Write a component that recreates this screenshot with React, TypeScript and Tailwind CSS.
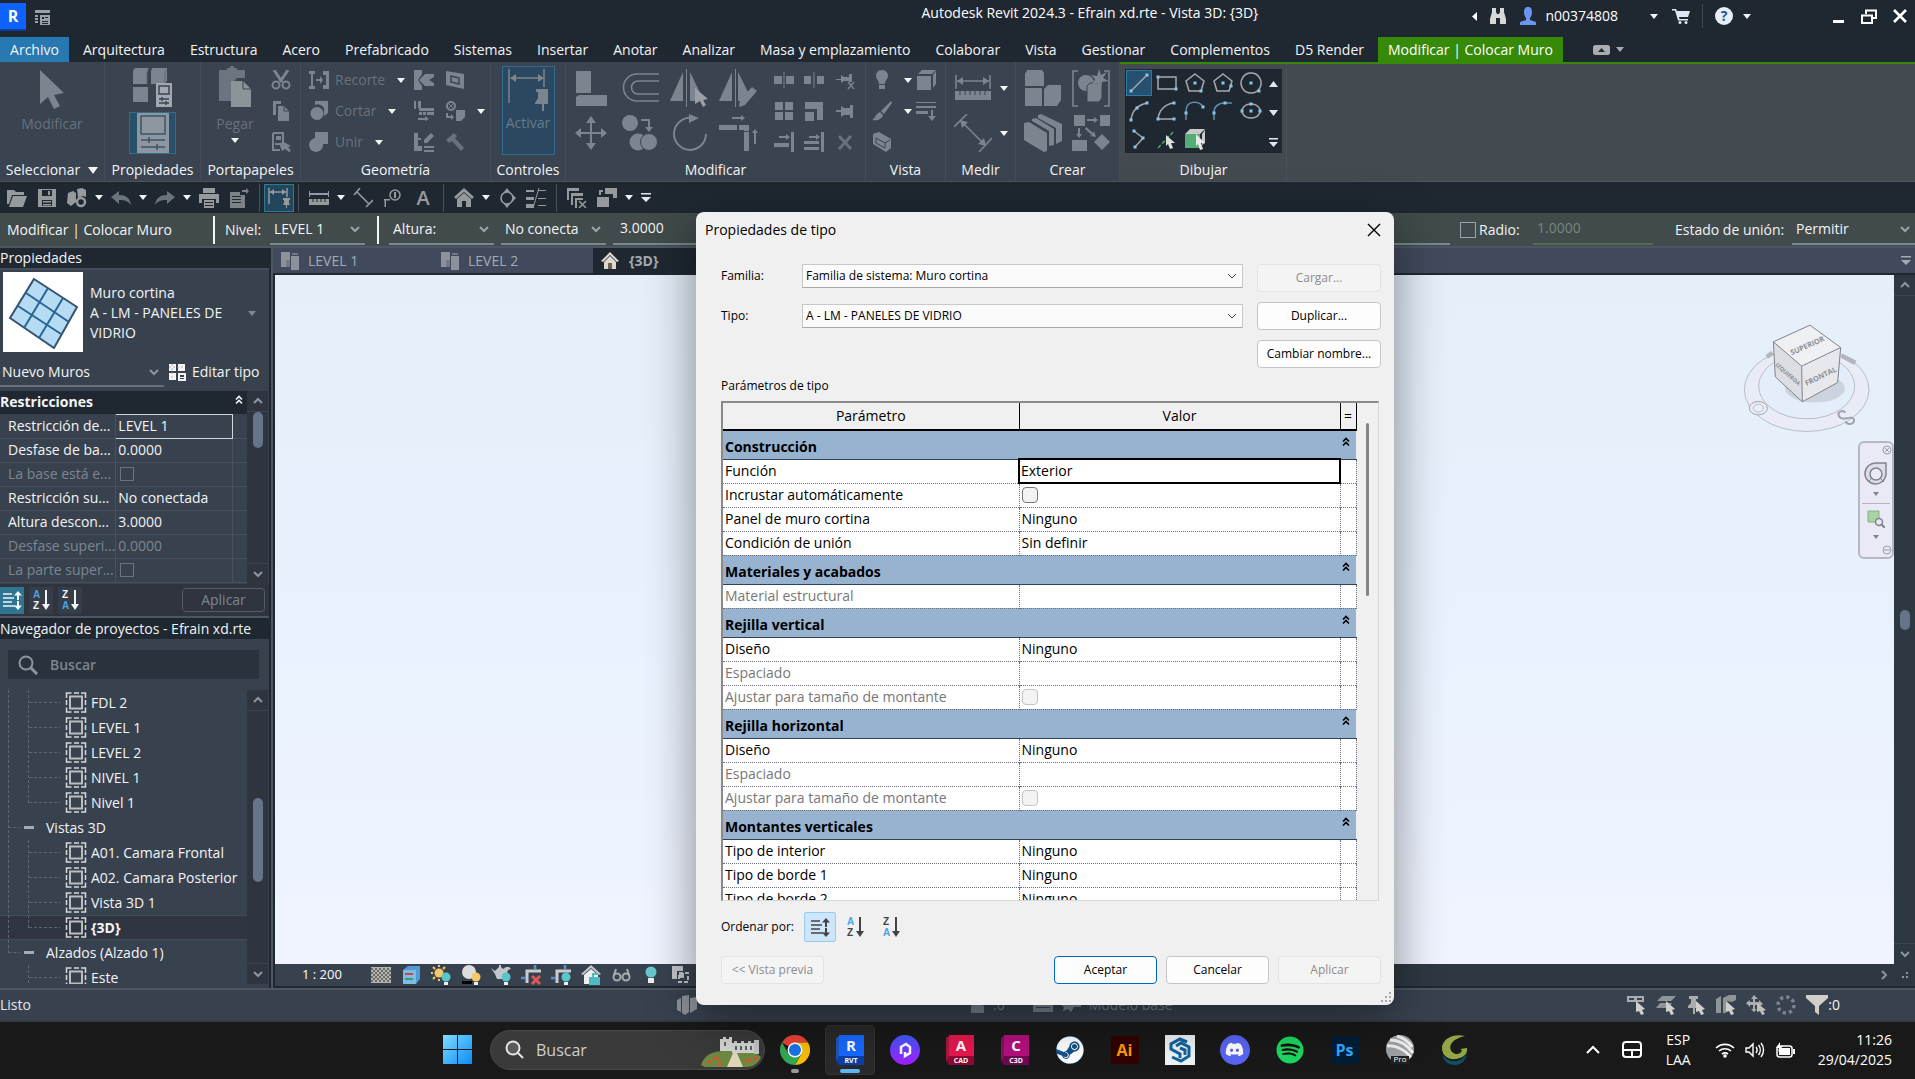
import type { ReactNode } from "react";
import { FaDiscord, FaSpotify, FaSteam } from "react-icons/fa";

type IconProps = { w: number; h: number; children: ReactNode; className?: string };

function Icon({ w, h, children, className = "" }: IconProps) {
  return (
    <svg width={w} height={h} viewBox={`0 0 ${w} ${h}`} fill="currentColor" aria-hidden="true" className={`shrink-0 ${className}`}>
      {children}
    </svg>
  );
}

function IconButton({ label, children, className = "" }: { label: string; children: ReactNode; className?: string }) {
  return (
    <button type="button" aria-label={label} className={`flex shrink-0 items-center justify-center ${className}`}>
      {children}
    </button>
  );
}

function Caret({ className = "text-gray-100" }: { className?: string }) {
  return (
    <Icon w={8} h={5} className={className}>
      <path d="M0 0h8L4 5z" />
    </Icon>
  );
}

function Chevron({ dir = "down", className = "" }: { dir?: "down" | "up" | "right"; className?: string }) {
  const d = dir === "down" ? "M2 4l4 4 4-4" : dir === "up" ? "M2 8l4-4 4 4" : "M4 2l4 4-4 4";
  return (
    <Icon w={12} h={12} className={className}>
      <path d={d} fill="none" stroke="currentColor" strokeWidth="2" />
    </Icon>
  );
}

function DoubleUp() {
  return (
    <Icon w={8} h={10}>
      <path d="M1 4.5L4 1.5l3 3M1 8.5l3-3 3 3" fill="none" stroke="currentColor" strokeWidth="1.6" />
    </Icon>
  );
}

function SortIcon({ kind }: { kind: "list" | "az" | "za" }) {
  if (kind === "list") {
    return (
      <Icon w={22} h={22}>
        <path d="M2 5h9M2 9h11M2 13h9M2 17h12" stroke="currentColor" strokeWidth="1.6" />
        <path d="M17 2l4 4.5h-3V11h-2V6.5h-3zM17 21l-4-4.5h3V12h2v4.5h3z" />
      </Icon>
    );
  }
  return (
    <Icon w={22} h={24} className="font-['Liberation_Sans',sans-serif] text-[10px] font-bold">
      <text x="3" y="10" className={kind === "az" ? "fill-[#4aa3e0]" : ""}>{kind === "az" ? "A" : "Z"}</text>
      <text x="3" y="21" className={kind === "za" ? "fill-[#4aa3e0]" : ""}>{kind === "az" ? "Z" : "A"}</text>
      <path d="M15 2h2v14h3l-4 6-4-6h3z" />
    </Icon>
  );
}

/* ---------- title bar ---------- */

function TitleBar() {
  return (
    <header className="flex h-[37px] items-start text-white">
      <div className="flex flex-1 items-center gap-2 pt-[3px]">
        <span className="flex h-7 w-[26px] items-center justify-center border-b-2 border-[#0b3f9e] bg-[#0f62fe] text-base font-bold">R</span>
        <IconButton label="Inicio" className="text-[#9aa0a6]">
          <Icon w={17} h={17}>
            <path d="M1 1h15v3H1zM1 6h3v2H1zM1 9h3v2H1zM1 12h3v2H1zM6 6h10v10H6z" />
            <path d="M8 8h2v2H8zM11 8h3v1h-3zM8 12h6v1H8zM8 14h6v1H8z" fill="#1f2831" />
          </Icon>
        </IconButton>
      </div>
      <h1 className="pt-[3px] pr-[214px] text-sm">Autodesk Revit 2024.3 - Efrain xd.rte - Vista 3D: {"{3D}"}</h1>
      <div className="flex h-8 items-center pr-2">
        <Icon w={5} h={9}><path d="M5 0v9L0 4.5z" /></Icon>
        <IconButton label="Buscar" className="ml-3">
          <Icon w={18} h={18} className="text-[#d8d8d8]">
            <path d="M3 1h4v4l1 2h2l1-2V1h4v4l2 7v5h-6v-6H7v6H1v-5l2-7z" />
          </Icon>
        </IconButton>
        <button type="button" className="ml-3 flex items-center gap-2 text-sm">
          <Icon w={18} h={18} className="text-[#6a94ee]">
            <path d="M9 0c3 0 4 2 4 5s-1 5-2 6v2l6 2v3H1v-3l6-2v-2C6 10 5 8 5 5s1-5 4-5z" />
          </Icon>
          n00374808
        </button>
        <span className="ml-8"><Caret /></span>
        <IconButton label="Tienda" className="ml-3.5">
          <Icon w={18} h={16} className="text-[#dfe6f5]">
            <path d="M0 1h4l1 2h13l-2 6H7l.5 2H16v1.5H6L3 2.5H0z" />
            <circle cx="8" cy="14.5" r="1.5" /><circle cx="14" cy="14.5" r="1.5" />
          </Icon>
        </IconButton>
        <span className="ml-3 h-6 w-px bg-[#3d4750]" />
        <IconButton label="Ayuda" className="ml-3 size-[18px] rounded-full bg-[#e6eef8] text-sm font-bold text-[#25509f]">?</IconButton>
        <span className="ml-2.5"><Caret /></span>
        <IconButton label="Minimizar" className="ml-20 h-4 w-4">
          <Icon w={12} h={14}><path d="M0 11h11v3H0z" /></Icon>
        </IconButton>
        <IconButton label="Restaurar" className="ml-3.5">
          <Icon w={16} h={15}>
            <path d="M5 5V1.5h10V9h-4M1 6.5h10V14H1z" fill="none" stroke="currentColor" strokeWidth="2" />
          </Icon>
        </IconButton>
        <IconButton label="Cerrar" className="ml-4">
          <Icon w={14} h={14}><path d="M1 1l12 12M13 1L1 13" stroke="currentColor" strokeWidth="2.6" /></Icon>
        </IconButton>
      </div>
    </header>
  );
}

const tabs = [
  "Arquitectura", "Estructura", "Acero", "Prefabricado", "Sistemas", "Insertar", "Anotar", "Analizar",
  "Masa y emplazamiento", "Colaborar", "Vista", "Gestionar", "Complementos", "D5 Render",
];

function RibbonTabs() {
  return (
    <nav className="flex h-[25px] items-stretch text-sm whitespace-nowrap text-gray-100">
      <button type="button" className="w-[69px] shrink-0 bg-[#2878b2]">Archivo</button>
      <div className="ml-3.5 flex gap-[25px]">
        {tabs.map((tab) => (
          <button key={tab} type="button">{tab}</button>
        ))}
      </div>
      <button type="button" className="ml-3.5 bg-[#378a08] px-2.5 text-white">Modificar | Colocar Muro</button>
      <IconButton label="Minimizar cinta" className="ml-[30px] gap-1.5 text-[#a9adb1]">
        <Icon w={17} h={10}>
          <rect width="17" height="10" rx="2.5" /><path d="M5 7l3.5-4L12 7z" fill="#1f2831" />
        </Icon>
        <Caret className="text-[#a9adb1]" />
      </IconButton>
    </nav>
  );
}

/* ---------- ribbon ---------- */

function Panel({ title, children, className = "" }: { title: ReactNode; children: ReactNode; className?: string }) {
  return (
    <section className={`flex shrink-0 flex-col border-r border-[#454e5c] bg-[#3a4350] ${className}`}>
      <div className="flex h-[97px] text-[#7c848f]">{children}</div>
      <h2 className="flex flex-1 items-center justify-center gap-2 text-sm text-gray-100">{title}</h2>
    </section>
  );
}

function SmallCol({ children, className = "" }: { children: ReactNode; className?: string }) {
  return <div className={`flex flex-col gap-[11px] pt-2 ${className}`}>{children}</div>;
}

function Cell({ label, caret, children, className = "" }: { label: string; caret?: boolean; children: ReactNode; className?: string }) {
  return (
    <span className={`flex h-5 items-center ${className}`}>
      <IconButton label={label}>{children}</IconButton>
      {caret && <span className="ml-3"><Caret /></span>}
    </span>
  );
}

function SelectPanel() {
  return (
    <Panel className="w-[105px]" title={<>Seleccionar <Icon w={10} h={7}><path d="M0 0h10L5 7z" /></Icon></>}>
      <button type="button" className="flex w-full flex-col items-center pt-2 text-sm">
        <Icon w={24} h={40}><path d="M0 0v34l8-7 6 12 6-3-6-11 10-2z" /></Icon>
        <span className="mt-1 text-[#68717d]">Modificar</span>
      </button>
    </Panel>
  );
}

function PropertiesPanel() {
  return (
    <Panel className="w-24" title="Propiedades">
      <div className="flex w-full flex-col items-center gap-1 pt-1">
        <IconButton label="Propiedades de tipo">
          <Icon w={42} h={42}>
            <path d="M3 2h14l-2 3v13H1V5zM20 2h15v13l-3 3H19V5zM1 21h15v15H1z" />
            <path d="M17 4l-2 2v12M35 4l-2 2v12" stroke="#5c6571" fill="none" />
            <path d="M24 17h16v24H24z" fill="#a3a9b0" />
            <path d="M27 20h10v8H27z" fill="none" stroke="#3a4350" strokeWidth="1.5" />
            <path d="M27 33h10M27 37h10M30 31v4M34 35v4" stroke="#3a4350" strokeWidth="1.5" />
          </Icon>
        </IconButton>
        <IconButton label="Propiedades" className="h-[42px] w-[47px] border border-[#2f6e8e] bg-[#29506a]">
          <Icon w={32} h={40} className="text-[#8e979f]">
            <path d="M0 0h32v40H0z" />
            <path d="M4 3h24v18H4z" fill="none" stroke="#3b5568" strokeWidth="1.5" />
            <path d="M4 27h24M4 34h24M12 24v6M20 31v6" stroke="#3b5568" strokeWidth="1.5" />
          </Icon>
        </IconButton>
      </div>
    </Panel>
  );
}

function ClipboardPanel() {
  return (
    <Panel className="w-[100px]" title="Portapapeles">
      <button type="button" className="ml-2.5 flex w-12 flex-col items-center pt-1 text-sm">
        <Icon w={36} h={42}>
          <path d="M2 4h8V2h3V0h4v2h3v2h8v8h-8l-6 6v17H2z" fill="#6c7480" />
          <path d="M14 15h12l8 8v18H14z" fill="#8b939b" />
          <path d="M26 15v8h8" fill="none" stroke="#3a4350" />
        </Icon>
        <span className="mt-1.5 mb-1 text-[#68717d]">Pegar</span>
        <Caret />
      </button>
      <SmallCol className="ml-3">
        <Cell label="Cortar">
          <Icon w={20} h={20}>
            <path d="M3 0l8 12M17 0L9 12" stroke="currentColor" strokeWidth="3" />
            <circle cx="5" cy="15" r="3.5" fill="none" stroke="currentColor" strokeWidth="2" />
            <circle cx="15" cy="15" r="3.5" fill="none" stroke="currentColor" strokeWidth="2" />
          </Icon>
        </Cell>
        <Cell label="Copiar">
          <Icon w={20} h={20}>
            <path d="M2 0h8v3H5v11H2zM7 5h6l5 5v10H7z" /><path d="M13 5v5h5" fill="none" stroke="#3a4350" />
          </Icon>
        </Cell>
        <Cell label="Igualar propiedades">
          <Icon w={20} h={20}>
            <path d="M2 1h10v9M2 1v17h7" fill="none" stroke="currentColor" strokeWidth="2" />
            <path d="M5 4h5v4H5zM4 11h6v2H4zM11 9l9 5-3 1 3 4-2 1-4-3-3 2-2-5z" />
          </Icon>
        </Cell>
      </SmallCol>
    </Panel>
  );
}

const geometryTools = [
  { label: "Recorte", icon: <path d="M0 1h6v3H4v12h2v3H0v-3h2V4H0zM7 9h4V6l3 4-3 4v-3H7zM14 1h6v18h-6v-4h3V5h-3z" /> },
  { label: "Cortar", icon: <path d="M6 0h13v12l-4 3V7A7 7 0 0 0 6 4zM8 6a6.5 6.5 0 1 1-.1 13A6.5 6.5 0 0 1 8 6z" /> },
  { label: "Unir", icon: <path d="M6 0h13v12h-5a7 7 0 1 1-8-6z" /> },
];

function GeometryPanel() {
  return (
    <Panel className="w-[190px]" title="Geometría">
      <SmallCol className="ml-2 w-[105px] text-sm">
        {geometryTools.map((tool) => (
          <button key={tool.label} type="button" className="flex h-5 items-center text-[#68717d]">
            <Icon w={20} h={20} className="mr-1.5 text-[#7c848f]">{tool.icon}</Icon>
            {tool.label}
            <span className="ml-3"><Caret /></span>
          </button>
        ))}
      </SmallCol>
      <SmallCol>
        <Cell label="Muesca"><Icon w={20} h={20}><path d="M0 0h8v4l-4 6 4 6v4H0zM11 4h9v3l-5 3 5 3v3h-9l-6-6z" /></Icon></Cell>
        <Cell label="Juntas"><Icon w={20} h={20}><path d="M0 0h2v8H0zM4 0h3v7H4zM5 7h15v3H5zM5 11h3v3H5zM9 11h3v3H9zM13 11h7v3h-7zM4 17h7v-2l4 3-4 2v-1H4z" /></Icon></Cell>
        <Cell label="Uniones"><Icon w={20} h={20}><path d="M0 1h4v5h3v2H4v6h4v5H0zM10 8l7-7 3 3-7 7h-3zM10 14h10v2H10zM10 18h10v2H10z" /></Icon></Cell>
      </SmallCol>
      <SmallCol className="ml-[11px]">
        <Cell label="Cara"><Icon w={20} h={20}><path d="M1 1l18 3v15L1 15z" /><path d="M6 6l8 2v6l-8-2z" fill="none" stroke="#3a4350" strokeWidth="1.5" /></Icon></Cell>
        <Cell label="Pintar" caret>
          <Icon w={20} h={20}>
            <circle cx="6" cy="5" r="4" fill="none" stroke="currentColor" strokeWidth="2" />
            <path d="M3 2l6 6M9 2L3 8" stroke="currentColor" />
            <path d="M11 9h9v7l-4 4h-5zM1 12h2v3h3v-2l3 3-3 3v-2H1z" />
          </Icon>
        </Cell>
        <Cell label="Demoler"><Icon w={20} h={20} className="text-[#69717c]"><path d="M1 8l8-7 3 3-2 2 9 10-3 3-9-10-3 2z" /></Icon></Cell>
      </SmallCol>
    </Panel>
  );
}

function ControlsPanel() {
  return (
    <Panel className="w-[75px]" title="Controles">
      <button type="button" className="mx-auto mt-1 flex h-[89px] w-[53px] flex-col items-center justify-start border border-[#2f6e8e] bg-[#2b4860] pt-0.5 text-sm">
        <Icon w={40} h={42}>
          <path d="M1 0v34M36 0v18M3 9h32" stroke="currentColor" strokeWidth="1.5" fill="none" />
          <path d="M2 9l6-4v8zM36 9l-6-4v8zM28 20h14v3h-2v6l3 5v1h-7v7h-2v-7h-7v-1l3-5v-6h-2z" />
        </Icon>
        <span className="mt-0.5 text-[#68798a]">Activar</span>
      </button>
    </Panel>
  );
}

function ModifyPanel() {
  return (
    <Panel className="w-[300px]" title="Modificar">
      <div className="grid grid-cols-[49px_49px_49px_49px] content-start gap-y-[7px] pt-[7px]">
        <IconButton label="Alinear"><Icon w={34} h={38}><path d="M2 2h15v22H2zM5 26h28v11H2v-9z" /></Icon></IconButton>
        <IconButton label="Desfase">
          <Icon w={40} h={38}>
            <path d="M39 5H17a13 13 0 0 0 0 27h22M39 12H18a6 6 0 0 0 0 13h21" fill="none" stroke="currentColor" strokeWidth="1.6" />
          </Icon>
        </IconButton>
        <IconButton label="Simetría - Eje">
          <Icon w={40} h={38}><path d="M14 3v29H1zM21 3l14 29H21z" /><path d="M17.5 0v38" stroke="currentColor" /><path d="M26 19l13 11-5 1 3 5-3 2-3-6-5 3z" fill="#9aa0a6" /></Icon>
        </IconButton>
        <IconButton label="Simetría - Dibujar eje">
          <Icon w={40} h={38}><path d="M14 3v29H1zM20 3l10 20-8 9h-2z" /><path d="M17.5 0v38" stroke="currentColor" /><path d="M34 18l5 4-12 14-6 2 1-7z" /></Icon>
        </IconButton>
        <IconButton label="Desplazar">
          <Icon w={34} h={38}><path d="M17 2l5 7h-4v9h9v-4l6 5-6 5v-4h-9v9h4l-5 7-5-7h4v-9H7v4l-6-5 6-5v4h9V9h-4z" /></Icon>
        </IconButton>
        <IconButton label="Copiar elementos">
          <Icon w={38} h={38}><circle cx="9" cy="9" r="8" /><circle cx="17" cy="28" r="8.5" /><circle cx="28" cy="28" r="8.5" stroke="#3a4350" /><path d="M20 5h9v8h3l-4 5-4-5h3V7h-7z" /></Icon>
        </IconButton>
        <IconButton label="Rotar">
          <Icon w={38} h={38}><path d="M22 4A16 16 0 1 0 36 20" fill="none" stroke="currentColor" strokeWidth="2" /><path d="M19 0l10 4-10 5z" /></Icon>
        </IconButton>
        <IconButton label="Recortar">
          <Icon w={40} h={38}><path d="M1 11h18v5H1zM21 11h10v6h-5v-1h-5zM26 18h5v19h-5zM14 3h9V1l4 3-4 3V5h-9zM36 30V19h-2l3-4 3 4h-2v11z" /></Icon>
        </IconButton>
      </div>
      <SmallCol className="ml-3">
        <Cell label="Dividir"><Icon w={20} h={20}><path d="M0 6h8v8H0zM12 6h8v8h-8zM9.500 2h1v16h-1z" /></Icon></Cell>
        <Cell label="Matriz"><Icon w={20} h={20}><path d="M1 1h8v8H1zM11 1h8v8h-8zM1 11h8v8H1zM11 11h8v8h-8z" /></Icon></Cell>
        <Cell label="Extender uno"><Icon w={20} h={20}><path d="M17 0h3v20h-3zM0 11h15v4H0zM5 4h7V2l4 3-4 3V6H5z" /></Icon></Cell>
      </SmallCol>
      <SmallCol className="ml-2.5">
        <Cell label="Dividir con hueco"><Icon w={20} h={20}><path d="M0 6h7v8H0zM13 6h7v8h-7zM9.500 2h1v16h-1z" /></Icon></Cell>
        <Cell label="Escala"><Icon w={20} h={20}><path d="M1 1h18v18h-6V8H1zM1 11h9v9H1z" /></Icon></Cell>
        <Cell label="Extender varios"><Icon w={20} h={20}><path d="M17 0h3v20h-3zM0 9h15v3H0zM0 15h15v3H0zM5 4h7V2l4 3-4 3V6H5z" /></Icon></Cell>
      </SmallCol>
      <SmallCol className="ml-3">
        <Cell label="Desbloquear"><Icon w={20} h={20}><path d="M0 9h5V5l3 2h5V4h3v8h-3v-1H8l-3 2v-3H0z" /><path d="M12 12l6 7M18 12l-6 7" stroke="currentColor" strokeWidth="1.5" /></Icon></Cell>
        <Cell label="Bloquear"><Icon w={20} h={20}><path d="M0 9h5V5l3 2h6V4h3v13h-3v-3H8l-3 2v-5H0z" /></Icon></Cell>
        <Cell label="Suprimir"><Icon w={20} h={20} className="text-[#69717c]"><path d="M3 4l12 13M15 4L3 17" stroke="currentColor" strokeWidth="3" /></Icon></Cell>
      </SmallCol>
    </Panel>
  );
}

function ViewPanel() {
  return (
    <Panel className="w-20" title="Vista">
      <SmallCol className="ml-1.5 w-11">
        <Cell label="Ocultar" caret>
          <Icon w={20} h={20}><path d="M10 0c4 0 6 3 6 6s-3 4-3 8H7c0-4-3-5-3-8s2-6 6-6zM7 15h6v4H7z" /></Icon>
        </Cell>
        <Cell label="Modificar gráficos" caret>
          <Icon w={20} h={20}><path d="M19 0l1 2-8 11-3-3zM8 11l3 3c-1 4-5 6-11 5 3-1 3-6 8-8z" /></Icon>
        </Cell>
        <Cell label="Caja de selección">
          <Icon w={20} h={20}><path d="M1 2l6-2 12 7v9l-5 4L1 12z" /><path d="M4 6l9 5v5l-9-5zM13 11l5-3" fill="none" stroke="#3a4350" /></Icon>
        </Cell>
      </SmallCol>
      <SmallCol>
        <Cell label="Caja"><Icon w={20} h={20}><path d="M6 0h14l-4 4H2zM1 6h14v14H1zM17 5l3-4v13l-3 4z" /></Icon></Cell>
        <Cell label="Grosor de línea"><Icon w={20} h={20}><path d="M0 1h20v1H0zM0 5h20v2H0zM0 10h12v3H0zM15 9h2v6h3l-4 5-4-5h3z" /></Icon></Cell>
      </SmallCol>
    </Panel>
  );
}

function MeasurePanel() {
  return (
    <Panel className="w-[70px]" title="Medir">
      <div className="flex flex-col gap-[7px] pt-[7px] pl-2">
        <div className="flex items-center gap-2">
          <IconButton label="Medir">
            <Icon w={38} h={38}>
              <path d="M2 6v14M36 6v14M3 12h32" stroke="currentColor" strokeWidth="1.6" />
              <path d="M3 12l6-4v8zM35 12l-6-4v8zM1 22h36v9H1z" />
              <path d="M6 22v4M11 22v4M16 22v4M21 22v4M26 22v4M31 22v4" stroke="#3a4350" />
            </Icon>
          </IconButton>
          <Caret />
        </div>
        <div className="flex items-center gap-2">
          <IconButton label="Acotar">
            <Icon w={38} h={38}>
              <path d="M0 13L13 0M25 38l13-14M7 7l24 24" stroke="currentColor" strokeWidth="1.6" /><path d="M6 6l8 2-6 6zM32 32l-8-2 6-6z" />
            </Icon>
          </IconButton>
          <Caret />
        </div>
      </div>
    </Panel>
  );
}

function CreatePanel() {
  return (
    <Panel className="w-[104px]" title="Crear">
      <div className="grid grid-cols-[38px_38px] content-start gap-x-2.5 gap-y-[7px] pt-[7px] pl-2">
        <IconButton label="Crear grupo"><Icon w={38} h={38}><path d="M3 1h15l2 3v13H1V5zM1 19h17v18H1zM20 20l4-4h13v15l-4 6H20z" /></Icon></IconButton>
        <IconButton label="Crear similar">
          <Icon w={38} h={38}>
            <path d="M6 2H1v35h5M32 2h5v35h-5" fill="none" stroke="currentColor" strokeWidth="1.6" />
            <circle cx="14" cy="14" r="8" />
            <path d="M15 17l3-3h12v15l-3 4H15z" stroke="#3a4350" />
            <path d="M27 0l2 6 6-3-4 6 6 3-7 1-1 6-4-5-5 2 3-6-4-4 6 1z" />
          </Icon>
        </IconButton>
        <IconButton label="Crear conjunto"><Icon w={38} h={38}><path d="M0 9l5-1 18 11v18l-3 1L0 26zM8 5l4-1 18 11v16l-5 1V17L8 7zM14 1l3-1 21 10v17l-6 3V14L14 4z" /></Icon></IconButton>
        <IconButton label="Crear piezas"><Icon w={38} h={38}><path d="M2 1h11v11H2zM28 1h10v11H28zM0 26h15v11H0zM30 20l8 8-8 8-8-8zM15 5h7V3l4 3-4 3V7h-7zM6 14h2v6h2l-3 4-3-4h2zM14 13l7 6 1-2 2 6-6-1 2-1-7-6z" /></Icon></IconButton>
      </div>
    </Panel>
  );
}

const drawTools: { label: string; d: string; dots: [number, number][]; accent?: boolean }[] = [
  { label: "Línea", d: "M3 19L19 3", dots: [[3, 19], [19, 3]] },
  { label: "Rectángulo", d: "M2 5h18v12H2z", dots: [[2, 5], [20, 17]] },
  { label: "Polígono inscrito", d: "M11 2l9 7-3 10H5L2 9z", dots: [[11, 11], [17, 19]] },
  { label: "Polígono circunscrito", d: "M11 2l9 7-3 10H5L2 9z", dots: [[11, 11], [19, 14]] },
  { label: "Círculo", d: "M11 1a10 10 0 1 0 .1 0z", dots: [[11, 11], [19, 19]] },
  { label: "Arco inicio-fin", d: "M3 20C4 11 10 5 19 3", dots: [[3, 20], [9, 8], [19, 3]] },
  { label: "Arco centro", d: "M2 19C3 10 9 4 18 3M3 19h15", dots: [[18, 3], [18, 19], [2, 19]] },
  { label: "Arco tangente", d: "M2 20v-9C2 0 16 0 19 7", dots: [[2, 13], [19, 7]], accent: true },
  { label: "Empalme", d: "M2 20v-8c0-5 4-9 11-9h7", dots: [[2, 13], [13, 3]], accent: true },
  { label: "Elipse", d: "M11 4a9 7 0 1 0 .1 0z", dots: [[11, 11], [2, 11], [20, 11], [11, 4]] },
  { label: "Elipse parcial", d: "M6 3l9 7-8 9", dots: [[6, 3], [15, 10], [7, 19]] },
];

function DrawPanel() {
  return (
    <section className="flex w-[167px] shrink-0 flex-col border-t-2 border-r border-t-[#378a08] border-r-[#4a535c] bg-[#434b51] pr-1 pl-[5px]">
      <div className="mt-[5px] flex h-[84px] items-stretch bg-[#1f2831]">
        <div className="grid grid-cols-[28px_28px_28px_28px_28px] grid-rows-[28px_28px_28px] text-[#a6a9ac]">
          {drawTools.map((tool, i) => (
            <IconButton
              key={tool.label}
              label={tool.label}
              className={i === 0 ? "m-px border border-[#2f7aa5] bg-[#265070]" : ""}
            >
              <Icon w={22} h={22} className={tool.accent ? "text-[#5c8fb5]" : ""}>
                <path d={tool.d} fill="none" stroke="currentColor" strokeWidth="1.5" />
                {tool.dots.map(([x, y]) => (
                  <rect key={`${x}-${y}`} x={x - 1.5} y={y - 1.5} width="3" height="3" fill="#8cc3ea" />
                ))}
              </Icon>
            </IconButton>
          ))}
          <IconButton label="Seleccionar líneas">
            <Icon w={22} h={22}><path d="M2 20L18 3" stroke="#4fa373" strokeWidth="1.5" strokeDasharray="4 2" /><path d="M10 7l9 8h-4l2 5-3 1-2-5-2 2z" fill="#e0e0e0" /></Icon>
          </IconButton>
          <IconButton label="Seleccionar caras">
            <Icon w={22} h={22}><path d="M6 1h15l-5 5H1zM18 6l3-4v13l-3 2z" fill="#c9c9c9" /><path d="M1 6h15v14H1z" fill="#52ad79" /><path d="M12 6l9 9h-4l2 6-3 1-2-6-2 2z" fill="#e8e8e8" /></Icon>
          </IconButton>
        </div>
        <div className="flex flex-1 flex-col items-center justify-between pt-3 pb-1.5 text-gray-200">
          <Icon w={9} h={6}><path d="M0 6h9L4.5 0z" /></Icon>
          <Icon w={9} h={6}><path d="M0 0h9L4.5 6z" /></Icon>
          <Icon w={9} h={9}><path d="M0 0h9v1.500H0zM0 4h9L4.500 9z" /></Icon>
        </div>
      </div>
      <h2 className="mt-1.5 flex flex-1 items-center justify-center text-sm text-gray-100">Dibujar</h2>
    </section>
  );
}

function Ribbon() {
  return (
    <div className="flex h-[120px] border-b border-[#4a535c] bg-[#434b51]">
      <SelectPanel />
      <PropertiesPanel />
      <ClipboardPanel />
      <GeometryPanel />
      <ControlsPanel />
      <ModifyPanel />
      <ViewPanel />
      <MeasurePanel />
      <CreatePanel />
      <DrawPanel />
      <div className="flex-1 border-t-2 border-[#378a08]" />
    </div>
  );
}

/* ---------- quick access + options bars ---------- */

function Sep() {
  return <span className="h-7 w-px shrink-0 bg-[#47515b]" />;
}

function QuickCaret() {
  return <span className="-mx-0.5"><Caret /></span>;
}

function QuickAccess() {
  return (
    <div className="flex h-[31px] items-center gap-2.5 px-[7px] text-[#969a9d]">
      <IconButton label="Abrir"><Icon w={20} h={18}><path d="M0 1h7l2 2h8v3H5L2 15H0zM6 7h14l-4 11H2z" /></Icon></IconButton>
      <IconButton label="Guardar"><Icon w={20} h={18}><path d="M1 0h18v18H1zM5 1v6h10V1zM5 11v6h10v-6z" fillRule="evenodd" /><path d="M6 12h8v1.500H6zM6 15h8v1.500H6zM11 2h2v4h-2z" /></Icon></IconButton>
      <IconButton label="Sincronizar"><Icon w={20} h={20}><path d="M1 5l5-2 3 2v9l-5 4-4-3zM10 1l5-1 4 2v7l-3-1-5 2z" /><circle cx="14" cy="14" r="4" fill="none" stroke="currentColor" strokeWidth="2.5" /></Icon></IconButton>
      <QuickCaret />
      <IconButton label="Deshacer" className="text-[#6b737a]"><Icon w={20} h={16}><path d="M0 7l8-6v4c7 0 11 3 12 10-3-4-6-5-12-5v4z" /></Icon></IconButton>
      <QuickCaret />
      <IconButton label="Rehacer" className="text-[#6b737a]"><Icon w={20} h={16}><path d="M20 7l-8-6v4C5 5 1 8 0 15c3-4 6-5 12-5v4z" /></Icon></IconButton>
      <QuickCaret />
      <IconButton label="Imprimir"><Icon w={20} h={20}><path d="M4 0h12v5H4zM0 6h20v9h-3v-4H3v4H0zM5 12h10v8H5z" /><path d="M6 14h8v1H6zM6 17h8v1H6z" fill="#1f2831" /></Icon></IconButton>
      <IconButton label="PDF"><Icon w={20} h={20} className="text-[#7d8286]"><path d="M1 4h10v3h5v13H1z" /><path d="M13 2h4V0l3 3-3 3V4h-4z" /><path d="M3 8h9v1H3zM3 11h9v1H3zM3 14h9v1H3z" fill="#1f2831" /></Icon></IconButton>
      <Sep />
      <IconButton label="Activar controles" className="-mx-1.5 h-7 w-[30px] border border-[#2f7a98] bg-[#22465c]">
        <Icon w={22} h={20}><path d="M1 0v16M19 0v9M2 4h16" stroke="currentColor" strokeWidth="1.5" /><path d="M2 4l4-3v6zM18 4l-4-3v6zM15 10h7v2h-1v3l1 2h-3v3h-1v-3h-3l1-2v-3h-1z" /></Icon>
      </IconButton>
      <Sep />
      <IconButton label="Medir distancia">
        <Icon w={20} h={14}><path d="M0 0h1v6H0zM19 0h1v6h-1zM1 2h18v2H1zM0 8h20v6H0z" /><path d="M4 8v3M8 8v3M12 8v3M16 8v3" stroke="#1f2831" /></Icon>
      </IconButton>
      <QuickCaret />
      <IconButton label="Cota alineada"><Icon w={20} h={20}><path d="M1 7l6-7M13 19l7-7M4 4l12 12" stroke="currentColor" strokeWidth="1.6" /></Icon></IconButton>
      <IconButton label="Etiqueta"><Icon w={20} h={18}><circle cx="12" cy="6" r="5" fill="none" stroke="currentColor" strokeWidth="1.5" /><path d="M11 3h2v6h-2zM1 10h6v1.500H3V18H1.500v-6.500H1z" /></Icon></IconButton>
      <button type="button" aria-label="Texto" className="w-5 text-xl leading-7 font-semibold">A</button>
      <Sep />
      <IconButton label="Vista 3D"><Icon w={20} h={20}><path d="M10 0l10 9-2 2-8-7-8 7-2-2z" /><path d="M3 11l7-6 7 6v8h-5v-6H8v6H3z" /></Icon></IconButton>
      <QuickCaret />
      <IconButton label="Sección"><Icon w={18} h={20}><circle cx="9" cy="10" r="6" fill="none" stroke="currentColor" strokeWidth="1.6" /><path d="M9 0l3 4H6zM9 20l3-4H6zM15 7l3 3-3 3z" /></Icon></IconButton>
      <IconButton label="Líneas finas"><Icon w={20} h={20}><path d="M0 2h8v2H0zM12 2h8v1h-8zM0 9h8v3H0zM12 10h8v1h-8zM0 16h8v4H0zM12 17h8v1h-8z" /><path d="M13 0L7 20" stroke="currentColor" /></Icon></IconButton>
      <Sep />
      <IconButton label="Cerrar inactivas"><Icon w={20} h={20}><path d="M0 0h12v3H2v9H0zM4 5h12v3H6v9H4zM8 10h8v2h-6v8H8z" /><path d="M12 13l7 7M19 13l-7 7" stroke="currentColor" strokeWidth="1.5" /></Icon></IconButton>
      <IconButton label="Cambiar ventanas"><Icon w={20} h={20}><path d="M8 0h12v10h-4V6H8zM0 9h12v10H0zM2 2h4v2H4v3H2z" /></Icon></IconButton>
      <QuickCaret />
      <Icon w={10} h={9} className="text-gray-200"><path d="M0 0h10v1.500H0zM0 4h10L5 9z" /></Icon>
    </div>
  );
}

function BarSelect({ id, label, value, className = "" }: { id: string; label: string; value: string; className?: string }) {
  return (
    <span className={`flex h-8 items-center border-b-2 border-[#77898b] pt-0.5 ${className}`}>
      <select id={id} aria-label={label} className="min-w-0 flex-1 appearance-none bg-transparent pl-1 outline-none">
        <option>{value}</option>
      </select>
      <Chevron className="mr-1 text-[#9aa5a8]" />
    </span>
  );
}

function OptionsBar() {
  return (
    <div className="flex h-[35px] items-start border-b-2 border-[#4c5762] bg-[#414b4c] text-sm whitespace-nowrap text-gray-100">
      <span className="flex h-[34px] w-[213px] items-center pl-[7px]">Modificar | Colocar Muro</span>
      <span className="mt-[3px] h-7 w-0.5 bg-gray-100" />
      <label htmlFor="nivel" className="flex h-[34px] w-[55px] items-center pl-2.5">Nivel:</label>
      <BarSelect id="nivel" label="Nivel" value="LEVEL 1" className="w-[95px]" />
      <span className="mt-[3px] ml-3 h-7 w-0.5 bg-gray-100" />
      <BarSelect id="altura" label="Altura" value="Altura:" className="ml-2.5 w-[105px]" />
      <BarSelect id="restriccion" label="Restricción superior" value="No conecta" className="ml-[7px] w-[105px]" />
      <input aria-label="Altura desconectada" defaultValue="3.0000" className="ml-[7px] h-8 w-[120px] border-b-2 border-[#77898b] bg-transparent pb-0.5 pl-[7px] outline-none" />
      <span className="ml-auto h-8 w-[120px] border-b-2 border-[#77898b]" />
      <label className="ml-2.5 flex h-[34px] w-[73px] items-center gap-[3px]">
        <input type="checkbox" className="size-4 appearance-none border border-[#9aa5a8]" />
        Radio:
      </label>
      <input aria-label="Valor de radio" disabled defaultValue="1.0000" className="h-8 w-[120px] border-b-2 border-[#566a58] bg-transparent pb-0.5 pl-1 text-[#74877a]" />
      <label htmlFor="union" className="ml-[22px] flex h-[34px] w-[117px] items-center">Estado de unión:</label>
      <BarSelect id="union" label="Estado de unión" value="Permitir" className="w-[123px]" />
    </div>
  );
}

/* ---------- left column ---------- */

const properties: { name: string; value?: string; check?: boolean; off?: boolean; active?: boolean }[] = [
  { name: "Restricción de...", value: "LEVEL 1", active: true },
  { name: "Desfase de ba...", value: "0.0000" },
  { name: "La base está e...", check: true, off: true },
  { name: "Restricción su...", value: "No conectada" },
  { name: "Altura descon...", value: "3.0000" },
  { name: "Desfase superi...", value: "0.0000", off: true },
  { name: "La parte super...", check: true, off: true },
];

function Scrollbar({ thumb }: { thumb: string }) {
  return (
    <div className="mr-px flex w-[21px] shrink-0 flex-col items-center bg-[#2e353f] text-[#8d959e]">
      <span className="flex h-5 items-center"><Chevron dir="up" /></span>
      <div className="w-full flex-1 border-y border-[#3c4652]"><div className={`mx-auto w-2.5 rounded-full bg-[#66748a] ${thumb}`} /></div>
      <span className="flex h-5 items-center"><Chevron /></span>
    </div>
  );
}

function PropertiesPalette() {
  return (
    <section className="flex h-[370px] shrink-0 flex-col border-b-2 border-[#4c5762]">
      <h2 className="h-5 bg-[#1f2831] text-sm">Propiedades</h2>
      <div className="flex h-[86px] items-center border-t-2 border-[#434c59] pl-[3px]">
        <div className="flex size-20 items-center justify-center bg-white">
          <Icon w={74} h={74}>
            <path d="M28 4l43 28-23 41L4 43z" fill="#b5dcf2" stroke="#37546e" strokeWidth="2" />
            <path d="M42 13L18 53M57 23L33 63M20 18l43 29M12 31l43 28" stroke="#2a6398" strokeWidth="2" />
          </Icon>
        </div>
        <button type="button" className="ml-[7px] flex flex-1 items-center pt-0.5 text-left text-sm leading-5">
          <span className="w-[158px]">Muro cortina<br />A - LM - PANELES DE VIDRIO</span>
          <Caret className="text-[#7f8894]" />
        </button>
      </div>
      <div className="flex h-[37px] items-start text-sm">
        <span className="flex h-[33px] w-[164px] items-center border-b-2 border-[#66717f] pt-1">
          <select aria-label="Filtro" className="min-w-0 flex-1 appearance-none bg-transparent pl-0.5 outline-none"><option>Nuevo Muros</option></select>
          <Chevron className="mr-1 text-[#8d959e]" />
        </span>
        <button type="button" className="ml-[5px] flex h-9 items-center gap-1.5">
          <Icon w={17} h={17}>
            <path d="M0 0h7v7H0zM9 0h7v7H9zM0 9h7v7H0zM9 9h8v8H9z" />
            <path d="M11 11h4v2h-4zM11 14h4v1h-4z" fill="#38424f" />
            <path d="M0 3h16M3 0v16" stroke="#9aa0a8" strokeWidth="0.8" strokeDasharray="2 2" />
          </Icon>
          Editar tipo
        </button>
      </div>
      <div className="flex h-[193px] overflow-hidden">
        <table className="flex-1 table-fixed self-start text-sm">
          <colgroup><col className="w-[114px]" /><col className="w-[117px]" /><col /></colgroup>
          <thead>
            <tr className="h-[23px] bg-[#1f2831]">
              <th colSpan={2} className="text-left font-bold">Restricciones</th>
              <th className="align-top"><span className="flex pt-1 pl-0.5"><DoubleUp /></span></th>
            </tr>
          </thead>
          <tbody>
            {properties.map((row) => (
              <tr key={row.name} className={`h-6 border-b border-[#48525f] ${row.off ? "text-[#7d8590]" : ""}`}>
                <td className="border-r border-[#48525f] pl-2 leading-5 whitespace-nowrap">{row.name}</td>
                <td className={`pl-0.5 leading-5 ${row.active ? "border border-gray-300" : "border-r border-[#48525f]"}`}>
                  {row.check ? (
                    <input type="checkbox" disabled aria-label={row.name} className="ml-0.5 block size-3.5 appearance-none border border-[#6a7480]" />
                  ) : (
                    row.value
                  )}
                </td>
                <td />
              </tr>
            ))}
          </tbody>
        </table>
        <Scrollbar thumb="h-9" />
      </div>
      <div className="flex flex-1 items-center gap-[5px] bg-[#30343f] pr-1">
        <IconButton label="Orden original" className="h-[27px] w-6 bg-[#2f7490]"><SortIcon kind="list" /></IconButton>
        <IconButton label="Ascendente" className="h-[27px] w-6 bg-[#353d48]"><SortIcon kind="az" /></IconButton>
        <IconButton label="Descendente" className="h-[27px] w-6 bg-[#353d48]"><SortIcon kind="za" /></IconButton>
        <button type="button" disabled className="ml-auto h-6 w-[83px] rounded border border-[#525b66] text-sm text-[#7d8590]">Aplicar</button>
      </div>
    </section>
  );
}

const tree: { name: string; group?: boolean; active?: boolean; last?: boolean }[] = [
  { name: "FDL 2" }, { name: "LEVEL 1" }, { name: "LEVEL 2" }, { name: "NIVEL 1" }, { name: "Nivel 1", last: true },
  { name: "Vistas 3D", group: true },
  { name: "A01. Camara Frontal" }, { name: "A02. Camara Posterior" }, { name: "Vista 3D 1" },
  { name: "{3D}", active: true, last: true },
  { name: "Alzados (Alzado 1)", group: true, last: true },
  { name: "Este" },
];

function TreeRow({ item, index }: { item: (typeof tree)[number]; index: number }) {
  if (item.group) {
    return (
      <li className="flex h-[25px] items-center">
        <Icon w={46} h={25} className="text-[#5c6674]">
          <path d={`M8.500 0v${item.last ? 13 : 25}M8.500 12.500H20`} stroke="currentColor" strokeDasharray="3 2" />
          <path d="M24 11h10v3H24z" fill="#a4abb2" />
        </Icon>
        {item.name}
      </li>
    );
  }
  return (
    <li className={`flex h-[25px] items-center ${item.active ? "border-y border-[#434c58] bg-[#303641] font-bold" : ""}`}>
      <Icon w={91} h={25} className="text-[#5c6674]">
        <path d={`${index < 10 ? "M8.500 0v25" : ""}M28.500 0v${item.last ? 13 : 25}M29 12.500h31`} stroke="currentColor" strokeDasharray="3 2" />
        <path d="M66.500 8V3h5M74 3h5M81 3h4.500v5M85.500 10v5M85.500 17.500V22H81M79 22h-5M71.500 22h-5v-4.500M66.500 15v-5" fill="none" stroke="#d5d8da" strokeWidth="1.5" />
        <rect x="70" y="6.5" width="12" height="12" fill="none" stroke="#b9bdc0" strokeWidth="2" />
      </Icon>
      {item.name}
    </li>
  );
}

function ProjectBrowser() {
  return (
    <section className="flex min-h-0 flex-1 flex-col">
      <h2 className="h-[21px] bg-[#1f2831] pt-px text-sm leading-5 whitespace-nowrap">Navegador de proyectos - Efrain xd.rte</h2>
      <label className="mx-2 my-[11px] mr-2.5 flex h-[29px] shrink-0 items-center gap-3 bg-[#2a323d] pl-2.5 text-[#8d959e]">
        <Icon w={20} h={20}><circle cx="8" cy="8" r="6.5" fill="none" stroke="currentColor" strokeWidth="2" /><path d="M13 13l6 6" stroke="currentColor" strokeWidth="3" /></Icon>
        <input type="text" aria-label="Buscar en el proyecto" placeholder="Buscar" className="w-full bg-transparent text-sm font-semibold outline-none placeholder:text-[#7d858e]" />
      </label>
      <div className="mb-1 flex min-h-0 flex-1 overflow-hidden">
        <ul className="flex-1 text-sm whitespace-nowrap">
          {tree.map((item, i) => <TreeRow key={`${item.name}-${i}`} item={item} index={i} />)}
        </ul>
        <Scrollbar thumb="mt-[87px] h-[84px]" />
      </div>
    </section>
  );
}

/* ---------- drawing area ---------- */

function ViewCube() {
  return (
    <svg width="134" height="117" viewBox="120 180 402 350" aria-label="ViewCube" className="absolute top-[45px] right-5">
      <ellipse cx="320" cy="388" rx="187" ry="126" fill="#e9ebf6" stroke="#b9bdc9" strokeWidth="3" />
      <ellipse cx="320" cy="378" rx="144" ry="98" fill="#e4eefa" stroke="#b9bdc9" strokeWidth="3" />
      <ellipse cx="345" cy="385" rx="90" ry="42" fill="#bcc2ca" opacity="0.6" />
      <ellipse cx="175" cy="444" rx="27" ry="20" fill="#ececf4" stroke="#9fa3ab" strokeWidth="3" />
      <ellipse cx="175" cy="444" rx="15" ry="12" fill="#e6effa" stroke="#9fa3ab" strokeWidth="2" />
      <path d="M436 458c-6-10-24-4-20 8s20 10 26 8 22-4 20 8-20 12-26 2" fill="none" stroke="#9fa3ab" strokeWidth="6" />
      <path d="M200 290l18-12M424 286l42 22" stroke="#b3b6bf" strokeWidth="14" />
      <path d="M330 195l92 67-117 56-85-73z" fill="#eef0f4" />
      <path d="M220 245l85 73 2 107-81-75z" fill="#dcdee4" />
      <path d="M422 262l-117 56 2 107 106-58z" fill="#e6e8ec" />
      <path d="M330 195l92 67-117 56-85-73zM220 245l6 105 81 75 106-58 9-105M305 318l2 107" fill="none" stroke="#80838a" strokeWidth="3" />
      <g fill="#8b8e95" fontWeight="700" textAnchor="middle">
        <text x="322" y="264" fontSize="22" transform="rotate(-24 322 256)">SUPERIOR</text>
        <text x="362" y="356" fontSize="22" transform="rotate(-26 362 348)">FRONTAL</text>
        <text x="264" y="348" fontSize="17" transform="rotate(41 264 342)">IZQUIERDA</text>
      </g>
    </svg>
  );
}

function NavBar() {
  return (
    <div className="absolute top-[166px] right-0 flex h-[118px] w-9 flex-col items-center justify-between rounded-md border-2 border-[#b4b7c2] bg-[#e9eaf5] py-0.5 text-[#80838c]">
      <Icon w={10} h={10} className="self-end text-[#9a9da6]"><circle cx="5" cy="5" r="4" fill="none" stroke="currentColor" /><path d="M3 3l4 4M7 3L3 7" stroke="currentColor" /></Icon>
      <IconButton label="SteeringWheel">
        <Icon w={24} h={24}><path d="M12 1h10v11A10.500 10.500 0 1 1 12 1z" fill="#dcdde6" stroke="currentColor" strokeWidth="1.5" /><circle cx="12" cy="12" r="6" fill="#e9eaf5" stroke="currentColor" strokeWidth="1.5" /><path d="M4 20l4-4M20 20l-4-4" stroke="currentColor" /></Icon>
      </IconButton>
      <Icon w={6} h={4}><path d="M0 0h6L3 4z" /></Icon>
      <span className="h-px w-7 bg-[#b4b7c2]" />
      <IconButton label="Zoom">
        <Icon w={18} h={18}><path d="M1 1h11v11H1z" fill="#a9d3a0" stroke="#8aae84" /><circle cx="12" cy="12" r="3.5" fill="#e9eaf5" stroke="currentColor" strokeWidth="1.5" /><path d="M14 14l4 4" stroke="currentColor" strokeWidth="2" /></Icon>
      </IconButton>
      <Icon w={6} h={4}><path d="M0 0h6L3 4z" /></Icon>
      <Icon w={10} h={10} className="self-end text-[#9a9da6]"><circle cx="5" cy="5" r="4" fill="none" stroke="currentColor" /><path d="M2 5h6" stroke="currentColor" /></Icon>
    </div>
  );
}

function SheetIcon() {
  return (
    <Icon w={18} h={18} className="text-[#8c929b]">
      <path d="M0 0h9v15H0zM10 4h8v14h-8z" />
      <path d="M11 1h6v2h-6zM5 8h4v7H5z" fill="#737985" />
    </Icon>
  );
}

function DocTabs() {
  return (
    <div className="flex h-[25px] items-stretch bg-[#404a5c] text-sm text-[#a3aab3]">
      {["LEVEL 1", "LEVEL 2"].map((name) => (
        <button key={name} type="button" className="flex w-40 items-center gap-[9px] pl-2"><SheetIcon />{name}</button>
      ))}
      <button type="button" className="flex w-40 items-center gap-2.5 bg-[#1f2831] pl-2 font-bold">
        <Icon w={18} h={18} className="text-[#ddd9cc]"><path d="M9 0l9 9-2 1-7-7-7 7-2-1z" /><path d="M3 10l6-6 6 6v7H3z" /><path d="M7 11h4v6H7z" fill="#6d6250" /></Icon>
        {"{3D}"}
      </button>
      <span className="ml-auto flex items-center pr-1"><Icon w={10} h={9}><path d="M0 0h10v1.500H0zM0 4h10L5 9z" /></Icon></span>
    </div>
  );
}

function Bulb({ color }: { color: string }) {
  return (
    <g>
      <circle cx="15" cy="12" r="4.5" fill={color} />
      <path d="M13 17h4v3h-4z" fill="#eee" />
    </g>
  );
}

function ViewControls() {
  return (
    <div className="flex h-[22px] items-center bg-[#38424f] pl-[27px] text-[#c4c7ca]">
      <button type="button" className="w-[69px] text-left text-[13px] text-white">1 : 200</button>
      <div className="flex gap-2.5">
        <IconButton label="Nivel de detalle"><Icon w={20} h={20}><path d="M0 2h20v16H0z" fill="#b4b4aa" /><path d="M0 4h20M0 8h20M0 12h20M0 16h20" stroke="#6b6e6c" strokeWidth="2" strokeDasharray="2 2" /><path d="M2 6h18M2 10h18M2 14h18" stroke="#6b6e6c" strokeWidth="2" strokeDasharray="2 2" /></Icon></IconButton>
        <IconButton label="Estilo visual"><Icon w={20} h={20}><path d="M2 5l5-4h12v13l-4 5H2z" fill="#4f9bd8" /><path d="M2 5h13v14H2z" fill="#7dbbe8" /><path d="M4 8h8v2H4z" fill="#d24545" /><path d="M4 13h8v2H4z" fill="#3b9d5b" /></Icon></IconButton>
        <IconButton label="Camino de sol"><Icon w={20} h={20}><circle cx="8" cy="8" r="4.5" fill="#f5c968" /><path d="M8 0v2M8 14v2M0 8h2M2 2l2 2M14 2l-2 2M2 14l2-2" stroke="#f5c968" strokeWidth="2" /><Bulb color="#58c7c9" /></Icon></IconButton>
        <IconButton label="Sombras"><Icon w={20} h={20}><circle cx="8" cy="7" r="7" fill="#dcdcdc" /><path d="M1 16h10v3H1z" fill="#000" /><Bulb color="#f5c968" /></Icon></IconButton>
        <IconButton label="Renderizar"><Icon w={20} h={20}><path d="M0 3l4 3 2-2 2-2V0h2v2l2 2 3-2h3l2 2-3 1-3 9H6L4 9z" /><Bulb color="#58c7c9" /></Icon></IconButton>
        <IconButton label="Recortar vista"><Icon w={20} h={20}><path d="M6 18V6h14" fill="none" stroke="#c8cbd0" strokeWidth="3" /><path d="M0 13h4M14 0v4" stroke="#5c90c2" strokeWidth="2.5" /><path d="M11 11l8 8M19 11l-8 8" stroke="#e15656" strokeWidth="3" /></Icon></IconButton>
        <IconButton label="Mostrar recorte"><Icon w={20} h={20}><path d="M6 18V6h14" fill="none" stroke="#c8cbd0" strokeWidth="3" /><path d="M0 13h4M14 0v4" stroke="#5c90c2" strokeWidth="2.5" /><Bulb color="#58c7c9" /></Icon></IconButton>
        <IconButton label="Vista bloqueada"><Icon w={20} h={20}><path d="M10 0l10 9-2 1-8-7-8 7-2-1z" /><path d="M3 10l7-6 7 6v9H3z" fill="#eee" /><path d="M8 12h11v8H8z" fill="#4fb9c4" /><path d="M12 12V9h5" fill="none" stroke="#4fb9c4" strokeWidth="2" /></Icon></IconButton>
        <IconButton label="Ocultar temporalmente"><Icon w={20} h={20}><g fill="none" stroke="#a8acb0" strokeWidth="2"><circle cx="6" cy="12" r="3.5" /><circle cx="15" cy="12" r="3.5" /><path d="M3 10l2-6M18 10l-2-6" /></g></Icon></IconButton>
        <IconButton label="Mostrar ocultos"><Icon w={20} h={20}><circle cx="10" cy="7" r="5.5" fill="#66c9cf" /><path d="M7 13h6v5H7z" fill="#eee" /></Icon></IconButton>
        <IconButton label="Propiedades temporales"><Icon w={20} h={20}><path d="M1 1h11v5H6v8H1zM8 8h5v5H8z" /><path d="M8 8h9v9H8z" fill="none" stroke="currentColor" strokeWidth="2" strokeDasharray="4 2" /></Icon></IconButton>
      </div>
      <span className="ml-2 flex h-full flex-1 items-center justify-end bg-[#2e3842] pr-1 text-[#8d959e]"><Chevron dir="right" /></span>
    </div>
  );
}

function DrawingArea() {
  return (
    <main className="flex min-w-0 flex-1 flex-col border-l-2 border-[#4c5762] bg-[#1f2831] pb-0.5">
      <DocTabs />
      <div className="mt-0.5 flex min-h-0 flex-1 pl-0.5">
        <div className="flex min-w-0 flex-1 flex-col">
          <div className="relative flex-1 bg-linear-to-b from-[#e4effa] via-[#e8f2fe] to-[#f0f4ff]">
            <ViewCube />
            <NavBar />
          </div>
          <ViewControls />
        </div>
        <div className="flex w-[21px] flex-col items-center bg-[#2e3842] text-[#8d959e]">
          <span className="flex h-5 items-center"><Chevron dir="up" /></span>
          <div className="flex w-full flex-1 items-center justify-center border-y border-[#3c4652]"><div className="h-5 w-2.5 rounded-full bg-[#66748a]" /></div>
          <span className="flex h-5 items-center"><Chevron /></span>
          <Icon w={10} h={22}><path d="M6 8h2v2H6zM2 12h2v2H2zM6 12h2v2H6z" /></Icon>
        </div>
      </div>
    </main>
  );
}

/* ---------- status bar ---------- */

function StatusBar() {
  return (
    <footer className="flex h-8 items-center border-t-2 border-[#4c5762] bg-[#38424f] text-sm text-gray-200">
      <span className="w-[677px]">Listo</span>
      <Icon w={20} h={20} className="text-[#8f959c]"><path d="M0 5l4-2v14l-4-2zM5 1l7-1v17l-4 3-3-2zM13 3l7-1v12l-7 4z" /></Icon>
      <div className="flex flex-1 items-center gap-2 pl-[274px] text-[#7b838d]">
        <Icon w={14} h={16}><path d="M4 0h5v6l4 3v7H0V9l4-3z" /></Icon>
        <span className="mr-5">:0</span>
        <Icon w={20} h={14}><path d="M0 0h20v14H0zM3 4h14v1H3zM3 9h14v1H3z" fillRule="evenodd" /></Icon>
        <Icon w={20} h={14}><path d="M4 0h16v9h-7l-3 5-3-3-5 2 1-4-3-2 4-2z" /></Icon>
        <span>Modelo base</span>
      </div>
      <div className="flex items-center gap-2.5 pr-[75px] text-[#a9adb0]">
        <IconButton label="Seleccionar vínculos"><Icon w={20} h={20}><path d="M1 1h17v6H1zM3 3h5v2H3zM11 3h5v2h-5z" fillRule="evenodd" /><path d="M10 6l9 8-3 1 2 4-3 1-2-4-3 1z" fill="#d0d0d0" /></Icon></IconButton>
        <IconButton label="Seleccionar subyacentes"><Icon w={20} h={20}><path d="M6 1h14l-5 5H1zM4 8h12l-4 5H0z" fill="#8f9499" /><path d="M10 6l9 8-3 1 2 4-3 1-2-4-3 1z" fill="#d0d0d0" /></Icon></IconButton>
        <IconButton label="Seleccionar bloqueados"><Icon w={20} h={20}><path d="M3 1h9v3h-2v4l3 3v2H2v-2l3-3V4H3zM7 13h2v6H7z" /><path d="M10 6l9 8-3 1 2 4-3 1-2-4-3 1z" fill="#d0d0d0" /></Icon></IconButton>
        <IconButton label="Seleccionar por cara"><Icon w={20} h={20}><path d="M0 4l5-3v17H0zM7 3l6-3h7v5l-4 2-6-1v12H7z" fill="#8f9499" /><path d="M10 6l9 8-3 1 2 4-3 1-2-4-3 1z" fill="#d0d0d0" /></Icon></IconButton>
        <IconButton label="Arrastrar elementos"><Icon w={20} h={20}><path d="M8 0l4 4h-3v3h4V5l4 4-4 3v-2H9v4h2l-3 3-3-3h2v-4H4v2L0 8l4-3v2h3V4H5z" /><path d="M11 8l9 7-3 1 2 3-3 1-2-4-3 1z" fill="#c0c0c0" /></Icon></IconButton>
        <Icon w={20} h={20} className="text-[#7b838d]"><circle cx="10" cy="10" r="8" fill="none" stroke="currentColor" strokeWidth="3.5" strokeDasharray="3.200 3.080" /></Icon>
        <button type="button" className="flex items-center text-gray-100">
          <Icon w={22} h={20} className="text-[#d2cfca]"><path d="M0 0h22v3l-9 8v9l-4-3v-6L0 3z" /></Icon>:0
        </button>
      </div>
    </footer>
  );
}

/* ---------- dialog ---------- */

type Param = { name: string; value?: string; check?: boolean; off?: boolean; active?: boolean };

const groups: { title: string; params: Param[] }[] = [
  {
    title: "Construcción",
    params: [
      { name: "Función", value: "Exterior", active: true },
      { name: "Incrustar automáticamente", check: true },
      { name: "Panel de muro cortina", value: "Ninguno" },
      { name: "Condición de unión", value: "Sin definir" },
    ],
  },
  { title: "Materiales y acabados", params: [{ name: "Material estructural", off: true }] },
  {
    title: "Rejilla vertical",
    params: [
      { name: "Diseño", value: "Ninguno" },
      { name: "Espaciado", off: true },
      { name: "Ajustar para tamaño de montante", check: true, off: true },
    ],
  },
  {
    title: "Rejilla horizontal",
    params: [
      { name: "Diseño", value: "Ninguno" },
      { name: "Espaciado", off: true },
      { name: "Ajustar para tamaño de montante", check: true, off: true },
    ],
  },
  {
    title: "Montantes verticales",
    params: [
      { name: "Tipo de interior", value: "Ninguno" },
      { name: "Tipo de borde 1", value: "Ninguno" },
      { name: "Tipo de borde 2", value: "Ninguno" },
    ],
  },
];

function ParamGroup({ title, params }: { title: string; params: Param[] }) {
  return (
    <tbody>
      <tr className="h-[29px] border-b border-[#2f4358] bg-[#97b3cf]">
        <th colSpan={2} className="pt-1 pl-0.5 text-left leading-5 font-bold">{title}</th>
        <th className="align-top"><span className="flex pt-1.5 pl-0.5"><DoubleUp /></span></th>
      </tr>
      {params.map((p) => (
        <tr key={p.name} className={`h-6 border-b border-dotted border-gray-500 bg-white ${p.off ? "text-[#777]" : ""}`}>
          <td className="border-r border-dotted border-gray-500 pl-0.5 leading-5">{p.name}</td>
          <td className={`leading-5 ${p.active ? "border-2 border-solid border-black pl-px" : "border-r border-dotted border-gray-500 pl-0.5"}`}>
            {p.check ? (
              <input
                type="checkbox"
                aria-label={p.name}
                disabled={p.off}
                className="block size-4 appearance-none rounded border border-[#777] bg-[#f3f3f3] disabled:border-[#c4c4c4]"
              />
            ) : (
              p.value
            )}
          </td>
          <td className="border-r border-dotted border-gray-500" />
        </tr>
      ))}
    </tbody>
  );
}

function DialogSelect({ id, label, value }: { id: string; label: string; value: string }) {
  return (
    <div className="flex h-6 items-center">
      <label htmlFor={id} className="w-[81px]">{label}</label>
      <span className="relative flex flex-1">
        <select id={id} className="h-6 w-full appearance-none border border-[#c8c8c8] border-b-[#a8a8a8] bg-[#fbfbfb] pl-[3px]">
          <option>{value}</option>
        </select>
        <Icon w={10} h={6} className="pointer-events-none absolute top-[9px] right-1.5 text-[#444]">
          <path d="M1 1l4 4 4-4" fill="none" stroke="currentColor" />
        </Icon>
      </span>
    </div>
  );
}

const btn = "h-7 rounded border border-[#c6c6c6] bg-[#fdfdfd] disabled:border-[#e3e3e3] disabled:bg-[#f4f4f4] disabled:text-[#8c8c8c]";

function TypeDialog() {
  return (
    <div
      role="dialog"
      aria-label="Propiedades de tipo"
      className="absolute top-[212px] left-[696px] flex h-[793px] w-[698px] flex-col rounded-lg bg-[#f0f0f0] px-[13px] text-xs text-black shadow-[0_12px_50px_rgba(0,0,0,0.45)]"
    >
      <div className="-ml-1 flex h-9 items-center justify-between text-sm">
        <h2>Propiedades de tipo</h2>
        <IconButton label="Cerrar diálogo"><Icon w={14} h={14}><path d="M1 1l12 12M13 1L1 13" stroke="currentColor" strokeWidth="1.4" /></Icon></IconButton>
      </div>
      <div className="mt-4 ml-3 flex gap-3.5">
        <div className="flex flex-1 flex-col gap-4">
          <DialogSelect id="familia" label="Familia:" value="Familia de sistema: Muro cortina" />
          <DialogSelect id="tipo" label="Tipo:" value="A - LM - PANELES DE VIDRIO" />
        </div>
        <div className="flex w-[124px] flex-col gap-2.5">
          <button type="button" disabled className={btn}>Cargar...</button>
          <button type="button" className={btn}>Duplicar...</button>
          <button type="button" className={btn}>Cambiar nombre...</button>
        </div>
      </div>
      <div className="mt-2 ml-3 h-[25px] leading-5">Parámetros de tipo</div>
      <div className="mr-0.5 ml-3 flex h-[500px] overflow-hidden border-t-2 border-r border-b border-l-2 border-[#d9d9d9] border-t-[#8a8a8a] border-l-[#8a8a8a] text-sm">
        <table className="w-[633px] table-fixed self-start">
          <colgroup><col className="w-[296px]" /><col className="w-[321px]" /><col className="w-4" /></colgroup>
          <thead>
            <tr className="h-[27px] border-b-2 border-black">
              <th className="border-r border-black font-normal">Parámetro</th>
              <th className="border-r border-black font-normal">Valor</th>
              <th className="border-r border-black font-normal">=</th>
            </tr>
          </thead>
          {groups.map((g) => <ParamGroup key={g.title} {...g} />)}
        </table>
        <div className="mt-5 ml-[9px] h-[173px] w-[3px] rounded-full bg-[#858585]" />
      </div>
      <div className="mt-[11px] ml-3 flex h-[30px] items-center text-[#444]">
        <span className="w-[83px] text-black">Ordenar por:</span>
        <IconButton label="Ordenar original" className="h-[30px] w-8 rounded-xs border border-[#98cbf3] bg-[#cde6fb]"><SortIcon kind="list" /></IconButton>
        <IconButton label="Ordenar ascendente" className="ml-2"><SortIcon kind="az" /></IconButton>
        <IconButton label="Ordenar descendente" className="ml-3.5"><SortIcon kind="za" /></IconButton>
      </div>
      <div className="mt-3.5 ml-3 flex gap-[9px]">
        <button type="button" disabled className={`mr-auto w-[103px] ${btn}`}>&lt;&lt; Vista previa</button>
        <button type="button" className="h-7 w-[103px] rounded border border-[#0067c0] bg-[#fdfdfd]">Aceptar</button>
        <button type="button" className={`w-[103px] ${btn}`}>Cancelar</button>
        <button type="button" disabled className={`w-[103px] ${btn}`}>Aplicar</button>
      </div>
      <Icon w={12} h={12} className="absolute right-0.5 bottom-0.5 text-[#aaa]">
        <path d="M9 1h2v2H9zM5 5h2v2H5zM9 5h2v2H9zM1 9h2v2H1zM5 9h2v2H5zM9 9h2v2H9z" />
      </Icon>
    </div>
  );
}

/* ---------- taskbar ---------- */

function AutodeskIcon({ letter, tag, base, dark }: { letter: string; tag: string; base: string; dark: string }) {
  return (
    <svg width="28" height="30" viewBox="0 0 28 30" fontWeight="700" textAnchor="middle" fill="#fff" aria-hidden="true">
      <path d="M0 3l4-3v22l-4 4z" fill={base} opacity="0.7" />
      <rect x="3" width="25" height="22" fill={base} />
      <path d="M3 21h25v9H3l-3-4z" fill={dark} />
      <text x="15" y="16" fontSize="15">{letter}</text>
      <text x="15" y="28" fontSize="7">{tag}</text>
    </svg>
  );
}

const apps: { name: string; icon: ReactNode; active?: boolean; dot?: boolean }[] = [
  {
    name: "Chrome",
    dot: true,
    icon: (
      <Icon w={30} h={30}>
        <path d="M15 15L2 7.500A15 15 0 0 1 28 7.500H15z" fill="#ea4335" />
        <path d="M15 15V7.500h13A15 15 0 0 1 15 30l6.500-11.200z" fill="#fbbc05" />
        <path d="M15 30A15 15 0 0 1 2 7.500l6.500 11.300L15 15l6.500 3.800z" fill="#34a853" />
        <circle cx="15" cy="15" r="7.5" fill="#fff" /><circle cx="15" cy="15" r="6" fill="#1a73e8" />
      </Icon>
    ),
  },
  { name: "Revit", active: true, icon: <AutodeskIcon letter="R" tag="RVT" base="#1769ff" dark="#0b3fa8" /> },
  {
    name: "D5",
    icon: (
      <Icon w={30} h={30}>
        <defs><linearGradient id="d5" x1="0" y1="0" x2="0" y2="1"><stop offset="0" stopColor="#3f5cff" /><stop offset="1" stopColor="#a51cff" /></linearGradient></defs>
        <circle cx="15" cy="15" r="15" fill="url(#d5)" /><path d="M11 19v-7l5-3 4 3v6l-5 3v-4" fill="none" stroke="#fff" strokeWidth="2.5" />
      </Icon>
    ),
  },
  { name: "AutoCAD", icon: <AutodeskIcon letter="A" tag="CAD" base="#e8174f" dark="#8f0a32" /> },
  { name: "Civil 3D", icon: <AutodeskIcon letter="C" tag="C3D" base="#b5107e" dark="#6e0a50" /> },
  { name: "Steam", icon: <span className="flex size-7 items-center justify-center rounded-full bg-[#12528a] text-white"><FaSteam size={28} /></span> },
  { name: "Illustrator", icon: <span className="flex size-7 items-center justify-center rounded-sm bg-[#330000] text-base font-bold text-[#ff9a00]">Ai</span> },
  {
    name: "SketchUp",
    icon: (
      <Icon w={30} h={30}>
        <path d="M0 0h30v30H0z" fill="#eef3f7" />
        <path d="M22 7l-7-3-9 5v5l9 5v4M11 11l5-3 8 4v9l-8 5-9-4M15 13l5 2v5" fill="none" stroke="#12629c" strokeWidth="3" />
      </Icon>
    ),
  },
  { name: "Discord", icon: <span className="flex size-[30px] items-center justify-center rounded-full bg-[#5865f2] text-white"><FaDiscord size={19} /></span> },
  { name: "Spotify", icon: <span className="flex size-7 items-center justify-center rounded-full bg-[#111] text-[#1ed760]"><FaSpotify size={28} /></span> },
  { name: "Photoshop", icon: <span className="flex size-7 items-center justify-center rounded-sm bg-[#001e36] text-base font-bold text-[#31a8ff]">Ps</span> },
  {
    name: "Google Earth Pro",
    icon: (
      <Icon w={28} h={30}>
        <circle cx="14" cy="14" r="14" fill="#9da1a4" />
        <path d="M1 11c9-1 18 4 24 11M4 5c10 0 18 6 23 13M11 1c7 2 12 6 15 11" fill="none" stroke="#eceeef" strokeWidth="3" />
        <path d="M5 21h18v8H5z" fill="#222" /><text x="14" y="27" fontSize="8" textAnchor="middle" fill="#fff">Pro</text>
      </Icon>
    ),
  },
  {
    name: "Global Mapper",
    icon: (
      <Icon w={30} h={30}>
        <path d="M3 20c5 8 18 9 24-2-1 7-5 12-12 12S3 26 3 20z" fill="#0f4f66" />
        <path d="M25 1C12-2 2 5 2 13s7 12 14 11 12-5 11-11l-7 1 2 1c-1 5-7 5-10 2S8 5 25 1z" fill="#93a645" />
      </Icon>
    ),
  },
];

function Taskbar() {
  return (
    <footer className="flex h-[59px] shrink-0 items-center border-t-2 border-[#333a42] bg-[#191919] pb-0.5 text-white">
      <IconButton label="Inicio de Windows" className="ml-[443px]">
        <Icon w={29} h={29}>
          <defs><linearGradient id="win" x1="0" y1="0" x2="1" y2="1"><stop offset="0" stopColor="#7fdcff" /><stop offset="1" stopColor="#0a8df5" /></linearGradient></defs>
          <path d="M0 0h14v14H0zM15 0h14v14H15zM0 15h14v14H0zM15 15h14v14H15z" fill="url(#win)" />
        </Icon>
      </IconButton>
      <label className="ml-[18px] flex h-10 w-[275px] items-center gap-3 overflow-hidden rounded-full border border-[#484848] bg-[#3a3a3a] pr-0.5 pl-3.5">
        <Icon w={19} h={19}><circle cx="8" cy="8" r="6.5" fill="#5a5a5a" stroke="#e6e6e6" strokeWidth="2" /><path d="M13 13l5 5" stroke="#e6e6e6" strokeWidth="2" /></Icon>
        <input type="text" aria-label="Buscar en Windows" placeholder="Buscar" className="min-w-0 flex-1 bg-transparent text-base outline-none placeholder:text-[#d0d0d0]" />
        <Icon w={61} h={34}>
          <path d="M0 32C4 20 14 18 26 18s28 0 34 6c-2 6-8 10-14 10H4z" fill="#6f8a43" />
          <path d="M19 6h3V4h3v2h3V4h3v14H19zM31 10h26v10H31z" fill="#d5d6d2" />
          <path d="M33 8h3v2h-3zM40 8h3v2h-3zM47 8h3v2h-3zM53 7h5v14h-5z" fill="#c3c6c5" />
          <path d="M34 13h2v4h-2zM39 13h2v4h-2zM44 13h2v4h-2zM49 13h2v4h-2zM23 9h2v4h-2z" fill="#59636b" />
          <path d="M26 34l6-14h4l6 14z" fill="#e2d9b8" />
          <path d="M6 27h4v3H6zM13 24h5v3h-5zM16 29h5v3h-5zM45 26h5v3h-5zM52 24h4v3h-4z" fill="#cc5a2e" />
        </Icon>
      </label>
      <div className="ml-0.5 flex">
        {apps.map((app) => (
          <button key={app.name} type="button" aria-label={app.name} className="relative flex h-[50px] w-[55px] items-center justify-center">
            <span className={`flex h-[50px] w-[50px] items-center justify-center rounded ${app.active ? "border border-[#333] bg-[#2a2a2a]" : ""}`}>{app.icon}</span>
            {app.active && <span className="absolute bottom-0.5 h-1 w-5 rounded-full bg-[#5bb8f5]" />}
            {app.dot && <span className="absolute bottom-0.5 h-1 w-2 rounded-full bg-[#9a9a9a]" />}
          </button>
        ))}
      </div>
      <div className="ml-auto flex items-center pr-[23px] text-sm">
        <IconButton label="Iconos ocultos"><Icon w={14} h={9}><path d="M1 8l6-6 6 6" fill="none" stroke="currentColor" strokeWidth="2" /></Icon></IconButton>
        <IconButton label="Panel táctil" className="ml-[22px]"><Icon w={20} h={17}><rect x="1" y="1" width="18" height="15" rx="3" fill="none" stroke="currentColor" strokeWidth="2" /><path d="M1 9h18M10 9v7" stroke="currentColor" strokeWidth="2" /></Icon></IconButton>
        <button type="button" className="mx-6 text-center">ESP<br />LAA</button>
        <button type="button" aria-label="Red, sonido y batería" className="flex items-center gap-2.5">
          <Icon w={20} h={16}><path d="M1 6a13 13 0 0 1 18 0M4 9a9 9 0 0 1 12 0M7 12a5 5 0 0 1 6 0" fill="none" stroke="currentColor" strokeWidth="1.6" /><circle cx="10" cy="14" r="1.8" /></Icon>
          <Icon w={20} h={16}><path d="M1 6h3l4-4v12l-4-4H1z" fill="none" stroke="currentColor" strokeWidth="1.4" /><path d="M11 5a5 5 0 0 1 0 6M13.500 3a8 8 0 0 1 0 10M16 1a11 11 0 0 1 0 14" fill="none" stroke="currentColor" strokeWidth="1.4" /></Icon>
          <Icon w={20} h={16}><rect x="2" y="4" width="15" height="11" rx="2.5" fill="none" stroke="currentColor" strokeWidth="1.5" /><rect x="4" y="6" width="11" height="7" /><path d="M18 7h2v5h-2zM5 0L1 6h3l-1 4 5-6H5z" /></Icon>
        </button>
        <time className="ml-[23px] text-right">11:26<br />29/04/2025</time>
      </div>
    </footer>
  );
}

export default function App() {
  return (
    <div className="relative flex h-screen flex-col overflow-hidden bg-[#1f2831] font-['Open_Sans','Noto_Sans',sans-serif]">
      <TitleBar />
      <RibbonTabs />
      <Ribbon />
      <QuickAccess />
      <OptionsBar />
      <div className="flex min-h-0 flex-1">
        <aside className="flex w-[271px] shrink-0 flex-col border-r-2 border-[#1f2831] bg-[#38424f] text-gray-100">
          <PropertiesPalette />
          <ProjectBrowser />
        </aside>
        <DrawingArea />
      </div>
      <StatusBar />
      <Taskbar />
      <TypeDialog />
    </div>
  );
}
